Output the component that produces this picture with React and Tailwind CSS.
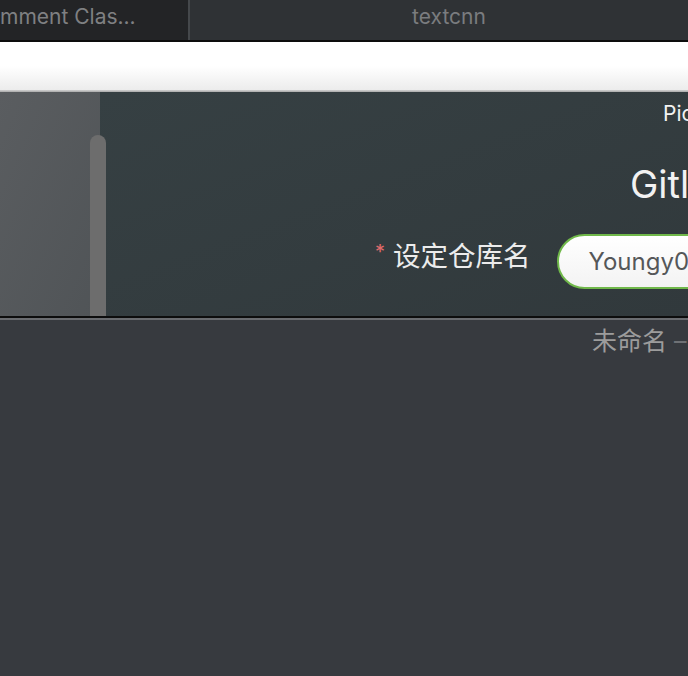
export default function App() {
  const sans = { fontFamily: 'Inter, "Noto Sans CJK SC", sans-serif' };
  return (
    <div className="w-[688px] h-[676px] overflow-hidden flex flex-col bg-[#373a3f]" style={sans}>
      {/* Tab bar */}
      <div className="h-[40px] flex shrink-0">
        <div className="w-[188px] h-full bg-[#232426] flex items-start pt-[4px] overflow-hidden whitespace-nowrap">
          <span className="text-[21px] leading-[26px] text-[#7f8082] ml-[0px]">mment Clas...</span>
        </div>
        <div className="w-[2px] h-full bg-[#45484b]" />
        <div className="flex-1 h-full bg-[#2f3235] flex items-start pt-[4px] justify-center">
          <span className="text-[21px] leading-[26px] text-[#7a7c7f] ml-[20px]">textcnn</span>
        </div>
      </div>
      <div className="h-[2px] bg-[#0d0d0d] shrink-0" />
      {/* Toolbar */}
      <div className="h-[48px] shrink-0 bg-gradient-to-b from-white via-white to-[#ececec]" />
      <div className="h-[2px] shrink-0 bg-gradient-to-b from-[#d2d2d2] to-[#a9a9a9]" />
      {/* Content */}
      <div className="h-[224px] shrink-0 flex relative">
        <div className="w-[100px] h-full bg-gradient-to-br from-[#5a5d60] to-[#505457]" />
        <div className="flex-1 h-full bg-gradient-to-br from-[#364043] to-[#31393c] overflow-hidden whitespace-nowrap">
          <div className="pl-[563px] pt-[8px] text-[21px] leading-[28px] text-[#f2f2f2]">Pic</div>
          <div className="pl-[530px] pt-[33px] text-[38px] leading-[46px] text-[#f2f2f2]">Gitl</div>
          <div className="flex items-center pt-[27px] pl-[275px]">
            <div className="flex items-start mb-[11px] shrink-0">
              <span className="text-[#e06b6b] text-[20px] leading-[20px] mr-[8px] mt-[6px]">*</span>
              <span className="text-[27.5px] text-[#ececec] leading-[40px]">设定仓库名</span>
            </div>
            <div className="ml-[26px] w-[300px] shrink-0 h-[55px] rounded-full border-[2px] border-[#70b84a] bg-gradient-to-b from-white to-[#f3f3f3] flex items-center pl-[30px]">
              <span className="text-[24px] text-[#555759]">Youngy0</span>
            </div>
          </div>
        </div>
        <div className="absolute left-[90px] top-[43px] bottom-0 w-[16px] rounded-t-full bg-[#6d6d6d]" />
      </div>
      <div className="h-[2px] shrink-0 bg-[#0d0d0d]" />
      <div className="h-[2px] shrink-0 bg-[#6a6c70]" />
      <div className="flex-1 bg-[#373a3f] whitespace-nowrap overflow-hidden">
        <div className="pl-[592px] pt-[4px] text-[25px] leading-[34px] text-[#9c9c9c]">
          未命名 <span className="text-[#6f7175]">–</span>
        </div>
      </div>
    </div>
  );
}
